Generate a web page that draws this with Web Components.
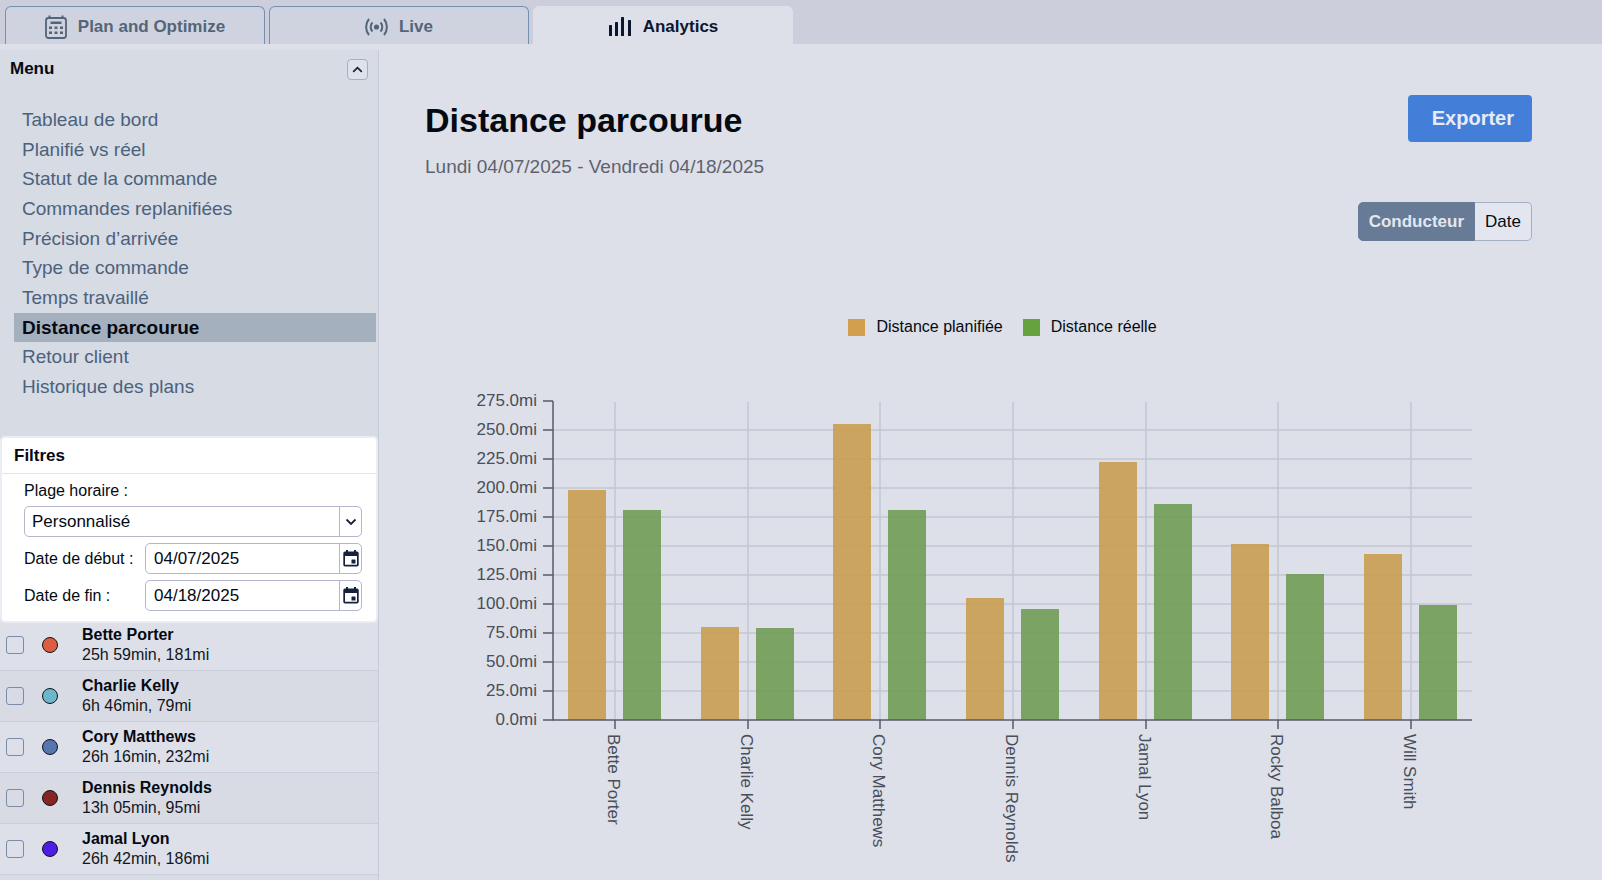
<!DOCTYPE html>
<html lang="fr">
<head>
<meta charset="utf-8">
<title>Analytics - Distance parcourue</title>
<style>
  :root {
    --page: #dde0e8;
    --panel: #d7dbe4;
    --line: #c6cbda;
    --slate: #536579;
    --ink: #050a12;
    --field-line: #b4b7cb;
  }

  body {
    margin: 0;
    background: var(--page);
    color: var(--ink);
    font-family: "Liberation Sans", Arial, sans-serif;
    font-size: 16px;
  }
</style>
</head>
<body>
<analytics-app></analytics-app>

<script>
/** Shared base: attaches an open shadow root and fills it once. */
class BaseElement extends HTMLElement {
  constructor() {
    super();
    this.attachShadow({ mode: "open" });
  }

  connectedCallback() {
    this.shadowRoot.innerHTML = `
      <style>
        *, *::before, *::after { box-sizing: border-box; }
        button, input, select { font: inherit; color: inherit; margin: 0; }
        svg { display: block; }
        ${this.styles()}
      </style>
      ${this.markup()}
    `;
  }

  styles() {
    return "";
  }

  markup() {
    return "<slot></slot>";
  }
}

/**
 * Tab in the top bar.
 *
 * @attr {boolean} active - Whether this is the current tab
 * @slot icon - Icon on the left side
 * @slot - Label
 */
class AppTab extends BaseElement {
  styles() {
    return `
      :host { display: block; flex: 0 1 260px; }
      button {
        display: flex;
        align-items: center;
        justify-content: center;
        gap: 11px;
        width: 100%;
        height: 38px;
        padding: 2px 0 0;
        border: 1px solid #7590ae;
        border-bottom: 0;
        border-radius: 6px 6px 0 0;
        background: #cfd3df;
        color: var(--slate);
        font-size: 17px;
        font-weight: 700;
        cursor: pointer;
      }
      :host([active]) button {
        border-color: var(--page);
        background: var(--page);
        color: #0b1730;
      }
    `;
  }

  markup() {
    return `
      <button type="button" role="tab" aria-selected="${this.hasAttribute("active")}">
        <slot name="icon"></slot>
        <span><slot></slot></span>
      </button>
    `;
  }
}

/** Collapsible menu with the report links. */
class ReportMenu extends BaseElement {
  items = [
    "Tableau de bord",
    "Planifié vs réel",
    "Statut de la commande",
    "Commandes replanifiées",
    "Précision d’arrivée",
    "Type de commande",
    "Temps travaillé",
    "Distance parcourue",
    "Retour client",
    "Historique des plans",
  ];

  current = "Distance parcourue";

  styles() {
    return `
      :host { display: block; }
      header {
        display: flex;
        align-items: center;
        justify-content: space-between;
        height: 38px;
        padding: 0 10px;
      }
      h2 { margin: 0; font-size: 17px; }
      button {
        display: grid;
        place-items: center;
        width: 21px;
        height: 21px;
        padding: 0;
        border: 1px solid #a3b0c6;
        border-radius: 4px;
        background: #dee2ea;
        color: #17223a;
      }
      nav {
        display: flex;
        flex-direction: column;
        justify-content: space-between;
        height: 296px;
        margin: 17px 2px 0 14px;
      }
      a {
        padding-left: 8px;
        color: #4b627d;
        font-size: 19px;
        line-height: 29px;
        text-decoration: none;
      }
      a[aria-current] {
        background: #a5b0bf;
        color: var(--ink);
        font-weight: 700;
      }
    `;
  }

  markup() {
    const links = this.items
      .map((item) => `<a href="#" ${item === this.current ? 'aria-current="page"' : ""}>${item}</a>`)
      .join("");
    return `
      <header>
        <h2>Menu</h2>
        <button type="button" aria-label="Réduire le menu">
          <svg width="11" height="7" viewBox="0 0 11 7" fill="none" stroke="currentColor" stroke-width="1.7"><path d="M1.2 5.8 5.5 1.6 9.8 5.8"/></svg>
        </button>
      </header>
      <nav>${links}</nav>
    `;
  }
}

/**
 * Text box with a calendar button.
 *
 * @attr {string} label
 * @attr {string} value
 */
class DateField extends BaseElement {
  styles() {
    return `
      :host { display: flex; align-items: center; }
      label { flex: 0 0 121px; }
      .box {
        display: flex;
        flex: 1;
        min-width: 0;
        height: 31px;
        border: 1px solid var(--field-line);
        border-radius: 5px;
        background: #fff;
      }
      input {
        flex: 1;
        min-width: 0;
        padding: 0 8px;
        border: 0;
        background: none;
        font-size: 17px;
      }
      button {
        display: grid;
        place-items: center;
        width: 22px;
        padding: 0;
        border: 0;
        border-left: 1px solid var(--field-line);
        background: none;
        color: #17223a;
      }
    `;
  }

  markup() {
    return `
      <label for="date">${this.getAttribute("label")}</label>
      <div class="box">
        <input id="date" type="text" value="${this.getAttribute("value")}">
        <button type="button" aria-label="Ouvrir le calendrier">
          <svg width="16" height="17" viewBox="0 0 16 17">
            <path fill="currentColor" fill-rule="evenodd" d="M3 0h2v1.5h6V0h2v1.5h1a1.7 1.7 0 0 1 1.7 1.7v11.6a1.7 1.7 0 0 1-1.7 1.7H2A1.7 1.7 0 0 1 .3 14.8V3.2A1.7 1.7 0 0 1 2 1.5h1zM2 6v8.800h12V6z"/>
            <rect x="8.5" y="9.5" width="4" height="4" rx=".6" fill="currentColor"/>
          </svg>
        </button>
      </div>
    `;
  }
}

/** Card with the date range filters. */
class FilterPanel extends BaseElement {
  styles() {
    return `
      :host {
        display: block;
        position: relative;
        z-index: 1;
        border: 2px solid #eaedf3;
        border-radius: 5px;
        background: #fff;
      }
      h2 {
        margin: 0;
        padding-left: 12px;
        border-bottom: 1px solid #e0e3ec;
        font-size: 17px;
        line-height: 35px;
      }
      form {
        display: grid;
        grid-template-columns: minmax(0, 1fr);
        gap: 6px;
        padding: 7px 14px 10px 22px;
      }
      .range { line-height: 19px; }
      .select {
        display: grid;
        grid-template-columns: minmax(0, 1fr) 23px;
        align-items: center;
      }
      select {
        grid-area: 1 / 1 / 2 / 3;
        height: 31px;
        padding: 0 30px 0 7px;
        border: 1px solid var(--field-line);
        border-radius: 5px;
        background: #fff;
        font-size: 17px;
        appearance: none;
      }
      .arrow {
        grid-area: 1 / 2;
        display: grid;
        place-items: center;
        height: 29px;
        border-left: 1px solid var(--field-line);
        color: #17223a;
        pointer-events: none;
      }
    `;
  }

  markup() {
    return `
      <h2>Filtres</h2>
      <form>
        <label class="range" for="range">Plage horaire :</label>
        <div class="select">
          <select id="range"><option>Personnalisé</option></select>
          <span class="arrow">
            <svg width="12" height="8" viewBox="0 0 12 8" fill="none" stroke="currentColor" stroke-width="1.8"><path d="M1.5 1.5 6 6l4.5-4.5"/></svg>
          </span>
        </div>
        <date-field label="Date de début :" value="04/07/2025"></date-field>
        <date-field label="Date de fin :" value="04/18/2025"></date-field>
      </form>
    `;
  }
}

/**
 * Driver row in the side list.
 *
 * @attr {string} name
 * @attr {string} color
 * @slot - Totals
 */
class DriverRow extends BaseElement {
  styles() {
    return `
      :host {
        display: block;
        flex: none;
        border-bottom: 1px solid #c9cedb;
      }
      label {
        display: grid;
        grid-template-columns: 18px 16px 1fr;
        column-gap: 18px;
        align-items: center;
        height: 50px;
        padding-left: 6px;
      }
      input {
        width: 18px;
        height: 18px;
        border: 1px solid #7b8ca6;
        border-radius: 3px;
        appearance: none;
      }
      i {
        width: 16px;
        height: 16px;
        border: 1px solid #10131c;
        border-radius: 50%;
        background: ${this.getAttribute("color")};
      }
      .text { padding-left: 6px; line-height: 20px; }
      b, .total { display: block; }
      .total { color: #12161e; }
    `;
  }

  markup() {
    return `
      <label>
        <input type="checkbox">
        <i></i>
        <span class="text">
          <b>${this.getAttribute("name")}</b>
          <span class="total"><slot></slot></span>
        </span>
      </label>
    `;
  }
}

/** Two-way switch between grouping modes. */
class GroupSwitch extends BaseElement {
  styles() {
    return `
      :host { display: flex; height: 39px; }
      button {
        padding: 0 10px;
        border: 1px solid #a3afc4;
        background: #e3e6ee;
        font-size: 17px;
      }
      button:first-of-type { border-radius: 5px 0 0 5px; }
      button:last-of-type { border-left: 0; border-radius: 0 5px 5px 0; }
      button[aria-pressed="true"] {
        border-color: #677b96;
        background: #677b96;
        color: #e2e7f0;
        font-weight: 700;
      }
    `;
  }

  markup() {
    return `
      <button type="button" aria-pressed="true">Conducteur</button>
      <button type="button" aria-pressed="false">Date</button>
    `;
  }
}

/** Grouped bar chart: planned and actual distance for each driver. */
class DistanceChart extends BaseElement {
  // name, planned, actual (miles)
  rows = [
    ["Bette Porter", 198, 181],
    ["Charlie Kelly", 80, 79],
    ["Cory Matthews", 255, 181],
    ["Dennis Reynolds", 105, 96],
    ["Jamal Lyon", 222, 186],
    ["Rocky Balboa", 152, 126],
    ["Will Smith", 143, 99],
  ];

  max = 275;
  step = 25;
  plot = { left: 128, right: 1047, top: 16, bottom: 335 };

  styles() {
    return `
      :host { display: block; }
      .legend {
        display: flex;
        justify-content: center;
        gap: 20px;
        padding-left: 48px;
        line-height: 20px;
      }
      .legend span { display: flex; align-items: center; gap: 11px; }
      .legend i { width: 17px; height: 17px; background: #d0a04d; }
      .legend .actual i { background: #66a33f; }
      svg { width: 100%; height: auto; margin-top: 48px; }
      text { fill: #484e5a; font-size: 17px; }
      path { fill: none; stroke-width: 1.5px; }
      .grid { stroke: #c2c7d5; }
      .axis { stroke: #545b69; }
      .planned-bar { fill: #c99d50; fill-opacity: .9; }
      .actual-bar { fill: #6f9c55; fill-opacity: .9; }
    `;
  }

  y(value) {
    const { top, bottom } = this.plot;
    return Math.round(bottom - (value / this.max) * (bottom - top));
  }

  x(index) {
    const { left, right } = this.plot;
    return Math.round(left + 62 + (index * (right - left - 123)) / (this.rows.length - 1));
  }

  yAxis() {
    const { left, right } = this.plot;
    let out = "";
    for (let v = 0; v <= this.max; v += this.step) {
      const y = this.y(v);
      if (v > 0 && v < this.max) {
        out += `<path class="grid" d="M${left} ${y}H${right}"/>`;
      }
      out += `<path class="axis" d="M${left - 10} ${y}H${left}"/>`;
      out += `<text x="${left - 16}" y="${y + 5}" text-anchor="end">${v.toFixed(1)}mi</text>`;
    }
    return out;
  }

  columns() {
    const { top, bottom } = this.plot;
    return this.rows
      .map(([name, planned, actual], i) => {
        const x = this.x(i);
        const bar = (cls, left, value) =>
          `<rect class="${cls}" x="${left}" y="${this.y(value)}" width="38" height="${bottom - this.y(value)}"/>`;
        return `
          <path class="grid" d="M${x} ${top + 1}V${bottom}"/>
          ${bar("planned-bar", x - 47, planned)}
          ${bar("actual-bar", x + 8, actual)}
          <path class="axis" d="M${x} ${bottom}v9"/>
          <text transform="translate(${x - 7} ${bottom + 14}) rotate(90)">${name}</text>
        `;
      })
      .join("");
  }

  markup() {
    const { left, right, top, bottom } = this.plot;
    return `
      <div class="legend">
        <span><i></i>Distance planifiée</span>
        <span class="actual"><i></i>Distance réelle</span>
      </div>
      <svg viewBox="0 0 1107 485" role="img" aria-label="Distance parcourue">
        ${this.yAxis()}
        ${this.columns()}
        <path class="axis" d="M${left} ${top}V${bottom}H${right}"/>
      </svg>
    `;
  }
}

/** Page frame: tabs, sidebar and report. */
class AnalyticsApp extends BaseElement {
  styles() {
    return `
      :host {
        display: flex;
        flex-direction: column;
        height: 100vh;
        overflow: hidden;
      }
      .tabs {
        display: flex;
        flex: none;
        gap: 4px;
        padding: 6px 5px 0;
        background: #cccfdb;
      }
      .body {
        display: flex;
        flex: 1;
        min-height: 0;
        padding-top: 6px;
      }
      aside {
        display: flex;
        flex: 0 0 379px;
        flex-direction: column;
        overflow: hidden;
        border-right: 1px solid var(--line);
        background: var(--panel);
      }
      filter-panel { flex: none; margin-top: 35px; }
      .drivers {
        display: flex;
        flex-direction: column;
        margin-top: -3px;
      }
      driver-row { background: #dde0e8; }
      driver-row:nth-child(even) { background: #d8dbe3; }
      main {
        flex: 1;
        min-width: 0;
        padding: 45px 70px 0 46px;
      }
      .head {
        display: flex;
        align-items: flex-start;
        justify-content: space-between;
      }
      h1 { margin: 6px 0 0; font-size: 34px; line-height: 38px; }
      p { margin: 16px 0 0; color: #5d636e; font-size: 19px; line-height: 24px; }
      .export {
        height: 47px;
        padding: 0 18px 0 24px;
        border: 0;
        border-radius: 4px;
        background: #437fd8;
        color: #e6ecf7;
        font: inherit;
        font-size: 20px;
        font-weight: 700;
      }
      .switch { display: flex; justify-content: flex-end; margin-top: 23px; }
      distance-chart { margin-top: 76px; }
    `;
  }

  markup() {
    return `
      <div class="tabs" role="tablist">
        <app-tab>
          <svg slot="icon" width="22" height="24" viewBox="0 0 22 24" fill="currentColor">
            <rect x="1" y="3" width="20" height="20" rx="2.5" fill="none" stroke="currentColor" stroke-width="1.8"/>
            <path d="M3.5.5h2v2.500h-2zM16.5.5h2v2.500h-2zM5.5 6.5h11v2.500h-11z"/>
            <path d="M4 11.5h3V14H4zM9.5 11.5h3V14h-3zM15 11.5h3V14h-3zM4 16.5h3V19H4zM9.5 16.5h3V19h-3zM15 16.5h3V19h-3z"/>
          </svg>
          Plan and Optimize
        </app-tab>
        <app-tab>
          <svg slot="icon" width="23" height="18" viewBox="0 0 23 18" fill="none" stroke="currentColor" stroke-width="2">
            <circle cx="11.5" cy="9" r="2.6" fill="currentColor" stroke="none"/>
            <path d="M7.5 4.5a6.5 6.5 0 0 0 0 9M15.5 4.5a6.5 6.5 0 0 1 0 9M4 1a12.5 12.5 0 0 0 0 16M19 1a12.5 12.5 0 0 1 0 16"/>
          </svg>
          Live
        </app-tab>
        <app-tab active>
          <svg slot="icon" width="24" height="20" viewBox="0 0 24 20" fill="currentColor">
            <rect x="1" y="8" width="3" height="11" rx=".5"/>
            <rect x="7" y="5" width="3" height="14" rx=".5"/>
            <rect x="13" y="0" width="3" height="19" rx=".5"/>
            <rect x="20" y="3" width="3" height="16" rx=".5"/>
          </svg>
          Analytics
        </app-tab>
      </div>
      <div class="body">
        <aside>
          <report-menu></report-menu>
          <filter-panel></filter-panel>
          <div class="drivers">
            <driver-row name="Bette Porter" color="#dc5d3f">25h 59min, 181mi</driver-row>
            <driver-row name="Charlie Kelly" color="#6ab8c9">6h 46min, 79mi</driver-row>
            <driver-row name="Cory Matthews" color="#5676b0">26h 16min, 232mi</driver-row>
            <driver-row name="Dennis Reynolds" color="#842722">13h 05min, 95mi</driver-row>
            <driver-row name="Jamal Lyon" color="#4f1ee6">26h 42min, 186mi</driver-row>
          </div>
        </aside>
        <main>
          <div class="head">
            <div>
              <h1>Distance parcourue</h1>
              <p>Lundi 04/07/2025 - Vendredi 04/18/2025</p>
            </div>
            <button class="export" type="button">Exporter</button>
          </div>
          <div class="switch"><group-switch></group-switch></div>
          <distance-chart></distance-chart>
        </main>
      </div>
    `;
  }
}

customElements.define("app-tab", AppTab);
customElements.define("report-menu", ReportMenu);
customElements.define("date-field", DateField);
customElements.define("filter-panel", FilterPanel);
customElements.define("driver-row", DriverRow);
customElements.define("group-switch", GroupSwitch);
customElements.define("distance-chart", DistanceChart);
customElements.define("analytics-app", AnalyticsApp);
</script>
</body>
</html>
